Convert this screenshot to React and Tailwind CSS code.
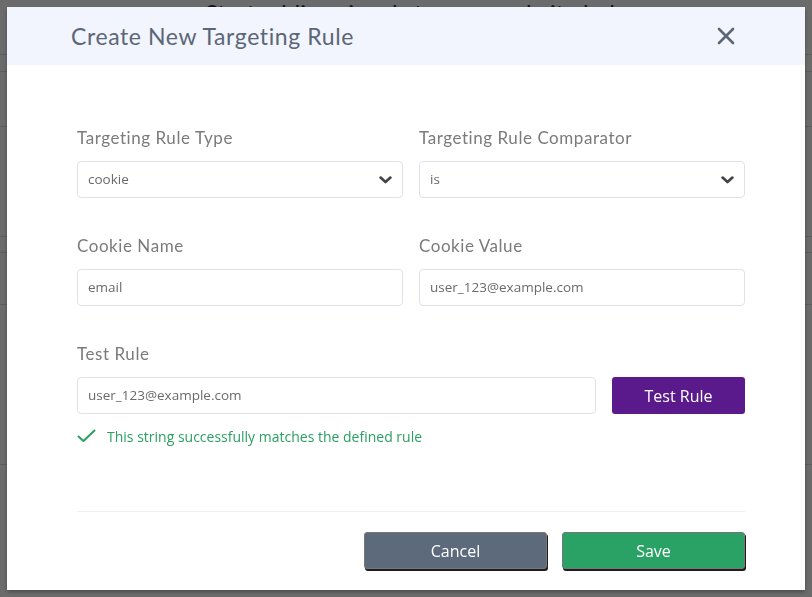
import React from "react";

const Chevron = () => (
  <svg width="13" height="8" viewBox="0 0 13 8" className="shrink-0">
    <path d="M1.6 1.6 L6.5 6 L11.4 1.6" fill="none" stroke="#454545" strokeWidth="2.7" strokeLinecap="round" strokeLinejoin="round" />
  </svg>
);

const Field = ({ label, value, select, className = "" }) => (
  <div className={"flex flex-col " + className}>
    <label className="text-[17px] leading-[24px] tracking-[0.55px] text-[#7b7b7b] font-['Lato',sans-serif]">{label}</label>
    <div className="mt-[11px] h-[37px] flex items-center justify-between rounded-[4px] border border-[#dfe2e9] bg-white pl-[10px] pr-[10px]">
      <span className="text-[13.5px] text-[#6a6a6a] font-['Open_Sans',sans-serif]">{value}</span>
      {select && <Chevron />}
    </div>
  </div>
);

export default function App() {
  return (
    <div className="relative h-[597px] w-full overflow-hidden bg-white">
      {/* page behind the overlay */}
      <div className="flex flex-col">
        <div className="h-[55px] border-b border-[#dcdcdc] flex justify-center">
          <h1 className="pl-[40px] text-[24px] leading-[26px] text-[#2f2f2f] font-['Lato',sans-serif]">
            Start adding signals to your website below
          </h1>
        </div>
        <div className="h-[17px] border-b border-[#dcdcdc]" />
        <div className="h-[55px] border-b border-[#dcdcdc]" />
        <div className="h-[110px] border-b border-[#dcdcdc]" />
        <div className="h-[16px] border-b border-[#dcdcdc]" />
        <div className="h-[52px] border-b border-[#dcdcdc]" />
        <div className="h-[160px] border-b border-[#dcdcdc]" />
      </div>

      {/* overlay + modal */}
      <div className="fixed inset-0 bg-black/[0.58] pt-[7px] px-[7px]">
        <div className="w-[798px] h-[583px] bg-white flex flex-col shadow-[0_2px_4px_rgba(0,0,0,0.3)]">
          <div className="h-[58px] bg-[#f2f5fd] flex items-center justify-between pl-[64px] pr-[70px] shrink-0">
            <h2 className="text-[23px] tracking-[0.6px] text-[#5b6677] font-['Lato',sans-serif]">Create New Targeting Rule</h2>
            <svg width="18" height="18" viewBox="0 0 18 18">
              <path d="M2 2 L16 16 M16 2 L2 16" stroke="#5b6677" strokeWidth="2.6" strokeLinecap="round" />
            </svg>
          </div>

          <div className="flex flex-col pl-[70px] pr-[60px] pt-[61px]">
            <div className="grid grid-cols-2 gap-x-[16px]">
              <Field label="Targeting Rule Type" value="cookie" select />
              <Field label="Targeting Rule Comparator" value="is" select />
              <Field label="Cookie Name" value="email" className="mt-[36px]" />
              <Field label="Cookie Value" value="user_123@example.com" className="mt-[36px]" />
            </div>

            <div className="mt-[36px] flex flex-col">
              <label className="text-[17px] leading-[24px] tracking-[0.55px] text-[#7b7b7b] font-['Lato',sans-serif]">Test Rule</label>
              <div className="mt-[11px] flex items-center gap-[16px]">
                <div className="h-[37px] flex-1 flex items-center rounded-[4px] border border-[#dfe2e9] pl-[10px]">
                  <span className="text-[13.5px] text-[#6a6a6a] font-['Open_Sans',sans-serif]">user_123@example.com</span>
                </div>
                <button className="h-[37px] w-[133px] rounded-[3px] bg-[#5b1a8b] text-white text-[16px] font-['Open_Sans',sans-serif]">
                  Test Rule
                </button>
              </div>
              <div className="mt-[12px] flex items-center gap-[11px] h-[20px]">
                <svg width="19" height="14" viewBox="0 0 19 14">
                  <path d="M1.5 7.5 L6.5 12 L17.5 1.5" fill="none" stroke="#2ba062" strokeWidth="2" strokeLinecap="round" strokeLinejoin="round" />
                </svg>
                <span className="text-[14px] text-[#2ba062] font-['Open_Sans',sans-serif]">This string successfully matches the defined rule</span>
              </div>
            </div>

            <div className="mt-[65px] border-t border-[#eef0f6]" />

            <div className="mt-[20px] flex justify-end gap-[15px]">
              <button className="h-[37px] w-[183px] rounded-[3px] bg-[#5d6a7b] border border-[#777] text-white text-[16px] font-['Open_Sans',sans-serif] shadow-[1px_2px_0_#1e1e1e]">
                Cancel
              </button>
              <button className="h-[37px] w-[183px] rounded-[3px] bg-[#2aa265] border border-[#777] text-white text-[16px] font-['Open_Sans',sans-serif] shadow-[1px_2px_0_#1e1e1e]">
                Save
              </button>
            </div>
          </div>
        </div>
      </div>
    </div>
  );
}
